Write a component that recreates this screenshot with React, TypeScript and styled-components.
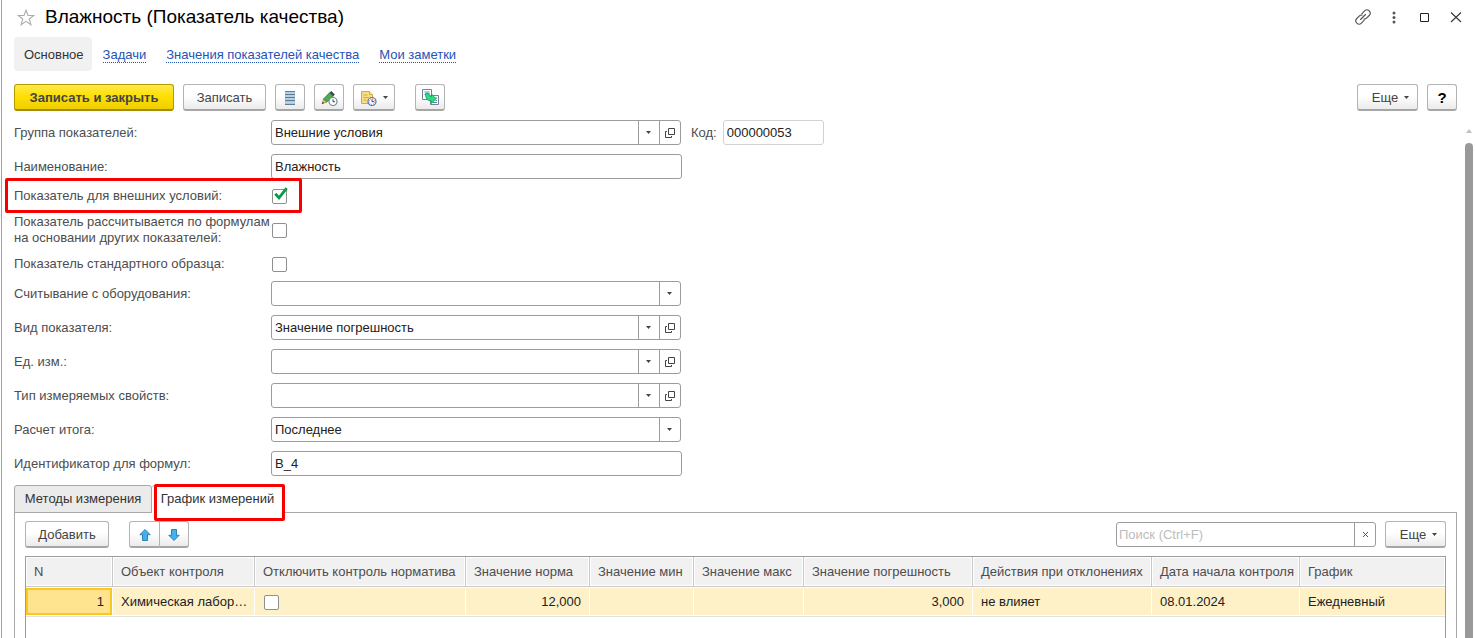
import React from "react";
import styled, { createGlobalStyle } from "styled-components";

const GlobalStyle = createGlobalStyle`
  *, *::before, *::after { box-sizing: border-box; }
  body {
    margin: 0;
    background: #fff;
    color: #4d4d4d;
    font-family: "Liberation Sans", Arial, sans-serif;
    font-size: 13px;
    line-height: 16px;
  }
  button, input, select { font: inherit; color: inherit; }
`;

const Window = styled.main`
  display: flex;
  flex-direction: column;
  height: 100vh;
  overflow: hidden;
  margin-left: 1px;
  padding-left: 1px;
  border-left: 1px solid #a0a0a0;
`;

const TitleBar = styled.header`
  display: flex;
  align-items: center;
  gap: 10px;
  height: 34px;
  padding: 0 11px 0 14px;
`;

const Title = styled.h1`
  flex: 1;
  margin: 0;
  font-size: 19px;
  line-height: 24px;
  font-weight: 400;
  color: #000;
`;

const PlainButton = styled.button`
  display: flex;
  padding: 0;
  border: 0;
  background: none;
  cursor: pointer;
`;

const WindowControls = styled.div`
  display: flex;
  align-items: center;
  gap: 15px;
`;

const Nav = styled.nav`
  display: flex;
  align-items: center;
  gap: 20px;
  margin: 3px 0 13px 11px;
`;

const CurrentPage = styled.span`
  margin-right: -9px;
  padding: 10px 8px 8px 10px;
  border-radius: 4px;
  background: #f1f1f1;
  color: #333;
`;

const NavLink = styled.a`
  padding-top: 2px;
  line-height: 14px;
  color: #2454b8;
  text-decoration: none;
  border-bottom: 1px dotted #2454b8;
`;

const Toolbar = styled.div<{ $inPanel?: boolean }>`
  display: flex;
  align-items: center;
  gap: 9px;
  padding: ${(p) => (p.$inPanel ? "0 0 8px" : "0 18px 0 11px")};
`;

const Gap = styled.span<{ $fill?: boolean }>`
  flex: ${(p) => (p.$fill ? "1" : "0 0 2px")};
`;

const Button = styled.button<{ $width?: number; $primary?: boolean }>`
  display: flex;
  align-items: center;
  justify-content: center;
  gap: 6px;
  width: ${(p) => p.$width ?? 30}px;
  height: 27px;
  padding: 1px 0 0;
  border: 1px solid ${(p) => (p.$primary ? "#b59a00" : "#b4b4b4")};
  border-bottom: ${(p) => (p.$primary ? "2px solid #a48c00" : "2px solid #a6a6a6")};
  border-radius: 3px;
  background: ${(p) =>
    p.$primary
      ? "linear-gradient(#ffe94a, #fddf00 50%, #efcf00)"
      : "linear-gradient(#fff 45%, #ebebeb)"};
  color: #444;
  font-weight: ${(p) => (p.$primary ? 700 : 400)};
  white-space: nowrap;
  cursor: pointer;
`;

const MoreButton = styled(Button)`
  padding-left: 6px;
`;

const HelpButton = styled(Button)`
  color: #000;
  font-size: 15px;
  font-weight: 700;
`;

const ButtonPair = styled.div`
  display: flex;
  margin-left: 11px;

  button:first-child { border-radius: 3px 0 0 3px; width: 31px; }
  button:last-child { border-radius: 0 3px 3px 0; margin-left: -1px; }
`;

const Body = styled.div`
  display: flex;
  flex: 1;
  min-height: 0;
  margin-top: 9px;
`;

const Content = styled.div`
  display: flex;
  flex-direction: column;
  flex: 1;
  min-width: 0;
  padding: 0 8px 0 11px;
`;

const ScrollTrack = styled.div`
  display: flex;
  flex-direction: column;
  align-items: center;
  gap: 9px;
  width: 8px;
  margin: 9px 2px 0 0;
`;

const ScrollThumb = styled.div`
  flex: 1;
  width: 8px;
  border-radius: 4px 4px 0 0;
  background: #999;
`;

const Form = styled.form`
  display: flex;
  flex-direction: column;
  gap: 9px;
  padding-bottom: 9px;
`;

const Row = styled.div<{ $height?: number }>`
  position: relative;
  display: flex;
  align-items: center;
  height: ${(p) => p.$height ?? 25}px;
`;

const Label = styled.label`
  flex: 0 0 257px;
  white-space: nowrap;
`;

const CodeLabel = styled.label`
  margin: 0 6px 0 10px;
`;

const Control = styled.div`
  display: flex;
  width: 410px;
  height: 25px;
  border: 1px solid #9c9c9c;
  border-radius: 3px;
  background: #fff;
  color: #222;
`;

const SelectBox = styled.div`
  position: relative;
  display: flex;
  flex: 1;
`;

const Select = styled.select`
  flex: 1;
  min-width: 0;
  padding: 0 24px 0 3px;
  border: 0;
  background: none;
  appearance: none;
`;

const SelectArrow = styled.span`
  position: absolute;
  inset: 0 0 0 auto;
  display: flex;
  align-items: center;
  justify-content: center;
  width: 21px;
  padding-right: 2px;
  border-left: 1px solid #9c9c9c;
  pointer-events: none;
`;

const CellButton = styled.button`
  display: flex;
  align-items: center;
  justify-content: center;
  width: 21px;
  padding: 0;
  border: 0;
  border-left: 1px solid #9c9c9c;
  background: none;
`;

const TextInput = styled.input<{ $code?: boolean }>`
  width: ${(p) => (p.$code ? 101 : 411)}px;
  height: 25px;
  padding: 0 3px;
  border: 1px solid ${(p) => (p.$code ? "#d2d2d2" : "#9c9c9c")};
  border-radius: 3px;
  background: #fff;
  color: #222;
`;

const CheckBox = styled.span`
  position: relative;
  display: inline-flex;
  margin-left: 1px;

  input {
    width: 15px;
    height: 15px;
    margin: 0;
    border: 1px solid #8f8f8f;
    border-radius: 2px;
    background: #fff;
    appearance: none;
  }

  svg {
    position: absolute;
    left: 2px;
    top: -2px;
    pointer-events: none;
  }
`;

const RedFrame = styled.span`
  position: absolute;
  border: 3px solid #f80000;
  border-radius: 2px;
  pointer-events: none;
`;

const RowFrame = styled(RedFrame)`
  inset: -10px auto -9px -9px;
  width: 297px;
`;

const TabFrame = styled(RedFrame)`
  inset: -2px -2px -9px 2px;
`;

const Tabs = styled.div`
  display: flex;
  height: 28px;
`;

const Tab = styled.button<{ $active?: boolean }>`
  position: relative;
  height: 28px;
  width: ${(p) => (p.$active ? 132 : 138)}px;
  padding: 0 0 1px;
  border: 1px solid #a8a8a8;
  border-bottom-color: ${(p) => (p.$active ? "#fff" : "#a8a8a8")};
  border-left-width: ${(p) => (p.$active ? 0 : 1)}px;
  border-radius: 3px 3px 0 0;
  background: ${(p) => (p.$active ? "#fff" : "#ebebeb")};
  color: #333;
  white-space: nowrap;
  z-index: 1;
`;

const Panel = styled.section`
  display: flex;
  flex-direction: column;
  flex: 1;
  min-height: 0;
  margin-top: -1px;
  padding: 8px 10px 0;
  border: 1px solid #a8a8a8;
  border-bottom: 0;
`;

const Search = styled(Control)`
  width: 260px;

  input {
    flex: 1;
    min-width: 0;
    padding: 0 2px;
    border: 0;
    background: none;
  }
  input::placeholder { color: #bdbdbd; opacity: 1; }
`;

const TableFrame = styled.div`
  flex: 1;
  border: 1px solid #9c9c9c;
  border-bottom: 0;
`;

const Table = styled.table`
  width: 100%;
  table-layout: fixed;
  border-collapse: separate;
  border-spacing: 0;
  border-bottom: 1px solid #e2e2e2;
`;

const Th = styled.th<{ $width?: number }>`
  width: ${(p) => (p.$width ? `${p.$width}px` : "auto")};
  height: 30px;
  padding: 1px 0 0 8px;
  border-right: 1px solid #c8c8c8;
  border-bottom: 1px solid #c8c8c8;
  box-shadow: inset 0 0 0 1px #fff;
  background: #f1f1f1;
  font-weight: 400;
  text-align: left;
  white-space: nowrap;

  &:last-child { border-right: 0; }
`;

const Td = styled.td<{ $right?: boolean; $selected?: boolean }>`
  height: 29px;
  padding: ${(p) => (p.$right ? "0 8px" : "0 0 0 8px")};
  border-right: 1px solid #fff;
  border-top: 1px solid #fff;
  border-bottom: 1px solid #fff;
  box-shadow: ${(p) => (p.$selected ? "inset 0 0 0 2px #fbc71d" : "none")};
  background: ${(p) => (p.$selected ? "#ffe48f" : "#fef1c7")};
  background-clip: padding-box;
  color: #222;
  text-align: ${(p) => (p.$right ? "right" : "left")};
  white-space: nowrap;

  &:last-child { border-right: 0; }
  ${CheckBox} { vertical-align: middle; }
`;

const Caret = () => (
  <svg width="5" height="3" viewBox="0 0 5 3" aria-hidden="true">
    <path d="M0 0h5L2.5 3z" fill="#444" />
  </svg>
);

const OpenIcon = () => (
  <svg width="10" height="10" viewBox="0 0 10 10" fill="none" stroke="#444" aria-hidden="true">
    <path d="M3.500 .5h6v6h-6zM2 3.500H.5v6h6V8" />
  </svg>
);

const StarIcon = () => (
  <svg width="18" height="17" viewBox="0 0 18 17" fill="none" stroke="#a8acb0" strokeWidth="1.100" aria-hidden="true">
    <path d="M9 1.200l2 5.300h5.800l-4.600 3.500 1.700 5.700L9 12.300l-4.900 3.400 1.700-5.700L1.200 6.500H7z" />
  </svg>
);

const LinkIcon = () => (
  <svg width="16" height="16" viewBox="0 0 16 16" fill="none" stroke="#555" strokeWidth="1.150" strokeLinecap="round" aria-hidden="true">
    <path d="M5.500 10.500l5-5" />
    <path d="M6.800 4.800l2.800-2.900a3.250 3.250 0 0 1 4.600 4.600l-2.900 2.800q-1 .9-2.300.6" />
    <path d="M9.200 11.200l-2.800 2.900a3.250 3.250 0 0 1-4.600-4.600l2.900-2.800q1-.9 2.300-.6" />
  </svg>
);

const DotsIcon = () => (
  <svg width="16" height="16" viewBox="0 0 16 16" fill="#555" aria-hidden="true">
    <circle cx="8" cy="4" r="1.500" /><circle cx="8" cy="8.500" r="1.500" /><circle cx="8" cy="13" r="1.500" />
  </svg>
);

const MaximizeIcon = () => (
  <svg width="16" height="16" viewBox="0 0 16 16" fill="none" stroke="#222" aria-hidden="true">
    <path d="M3.500 4.500h8v8h-8z" />
  </svg>
);

const CloseIcon = () => (
  <svg width="16" height="16" viewBox="0 0 16 16" fill="none" stroke="#333" strokeWidth="1.100" aria-hidden="true">
    <path d="M3 3.500l10 9.500M13 3.500L3 13" />
  </svg>
);

const ListIcon = () => (
  <svg width="10" height="14" viewBox="0 0 10 14" aria-hidden="true">
    <path d="M0 0h10v14H0z" fill="#a9c6da" />
    <path d="M0 .5h10M0 3.500h10M0 6.500h10M0 9.500h10M0 13.500h10" stroke="#5d7f98" />
    <path d="M1 2h8M1 5h8M1 8h8M1 11.500h8" stroke="#c3d8e6" />
  </svg>
);

const Clock = ({ red }: { red?: boolean }) => (
  <>
    <circle cx="12" cy="11.500" r="4" fill="#fff" stroke={red ? "#3f7fbf" : "#6e8a9c"} strokeWidth="1.200" />
    {red && <circle cx="12" cy="11.500" r="2.900" fill="none" stroke="#e0442f" strokeWidth=".9" strokeDasharray="1 1.280" />}
    <path d="M12 9.300v2.400h2" fill="none" stroke="#26486a" />
  </>
);

const PencilIcon = () => (
  <svg width="17" height="16" viewBox="0 0 17 16" aria-hidden="true">
    <path d="M1 14l1.500-5 3.200 3z" fill="#f0c96a" stroke="#a37b2b" strokeWidth=".6" />
    <path d="M1 14l.7-2.200 1.400 1.300z" fill="#333" />
    <path d="M2.500 9l6-6.200 3.700 3.500L5.700 12z" fill="#4dad52" stroke="#2b7439" strokeWidth=".8" />
    <path d="M8.500 2.800L10.300 1l3.600 3.500-1.700 1.800z" fill="#3c4a50" />
    <Clock />
  </svg>
);

const NoteIcon = () => (
  <svg width="17" height="16" viewBox="0 0 17 16" aria-hidden="true">
    <path d="M1.500 1.500h8l3 3v9h-11z" fill="#f7dc84" stroke="#d3ab45" />
    <path d="M9.500 1.500v3h3" fill="#fff2be" stroke="#d3ab45" />
    <path d="M3.500 5h4M3.500 7.500h5M3.500 10h3" stroke="#d3ab45" />
    <Clock red />
  </svg>
);

const CopyIcon = () => (
  <svg width="17" height="17" viewBox="0 0 17 17" aria-hidden="true">
    <path d="M.5 .5h9v10h-9z" fill="#fff" stroke="#71839a" />
    <path d="M8.500 6.500h8v9h-8z" fill="#fff" stroke="#71839a" />
    <path d="M2.500 3h5M2.500 5.500h2M13 9h2M13.500 11.500H15M11 13.500h4" stroke="#71839a" />
    <path d="M3.500 4.500h3.700c0 2.300.6 3.200 2.300 3.200V5l4.500 4.800-4.500 4.700v-2.600c-4 0-6-2.400-6-7.400z" fill="#25e083" stroke="#0f9a50" strokeWidth=".8" />
  </svg>
);

const ArrowIcon = ({ down }: { down?: boolean }) => (
  <svg width="12" height="12" viewBox="0 0 12 12" aria-hidden="true">
    <path
      d={down ? "M6 11.500L.8 6.300h2.700V.5h5v5.800h2.700z" : "M6 .5L.8 5.700h2.700v5.800h5V5.700h2.700z"}
      fill="#41b1f0"
      stroke="#2378ad"
      strokeWidth=".9"
    />
  </svg>
);

const SmallCross = () => (
  <svg width="7" height="7" viewBox="0 0 7 7" stroke="#555" aria-hidden="true">
    <path d="M1 1l5 5M6 1L1 6" />
  </svg>
);

const Tick = () => (
  <svg width="14" height="14" viewBox="0 0 14 14" fill="none" stroke="#0a9a48" strokeWidth="2.800" aria-hidden="true">
    <path d="M1.300 6.800l3.700 4L12.700 1.200" />
  </svg>
);

type ChoiceProps = { id: string; label: string; value?: string; open?: boolean; children?: React.ReactNode };

const ChoiceRow = ({ id, label, value = "", open, children }: ChoiceProps) => (
  <Row>
    <Label htmlFor={id}>{label}</Label>
    <Control>
      <SelectBox>
        <Select id={id} defaultValue={value}>
          <option value={value}>{value}</option>
        </Select>
        <SelectArrow><Caret /></SelectArrow>
      </SelectBox>
      {open && <CellButton type="button" aria-label="Открыть"><OpenIcon /></CellButton>}
    </Control>
    {children}
  </Row>
);

const columns: { title: string; width?: number }[] = [
  { title: "N", width: 87 },
  { title: "Объект контроля", width: 142 },
  { title: "Отключить контроль норматива", width: 211 },
  { title: "Значение норма", width: 124 },
  { title: "Значение мин", width: 104 },
  { title: "Значение макс", width: 110 },
  { title: "Значение погрешность", width: 169 },
  { title: "Действия при отклонениях", width: 179 },
  { title: "Дата начала контроля", width: 148 },
  { title: "График" },
];

export default function App() {
  return (
    <>
      <GlobalStyle />
      <Window>
        <TitleBar>
          <PlainButton aria-label="Избранное"><StarIcon /></PlainButton>
          <Title>Влажность (Показатель качества)</Title>
          <WindowControls>
            <PlainButton aria-label="Ссылка"><LinkIcon /></PlainButton>
            <PlainButton aria-label="Меню"><DotsIcon /></PlainButton>
            <PlainButton aria-label="Развернуть"><MaximizeIcon /></PlainButton>
            <PlainButton aria-label="Закрыть"><CloseIcon /></PlainButton>
          </WindowControls>
        </TitleBar>

        <Nav>
          <CurrentPage>Основное</CurrentPage>
          <NavLink href="#tasks">Задачи</NavLink>
          <NavLink href="#values">Значения показателей качества</NavLink>
          <NavLink href="#notes">Мои заметки</NavLink>
        </Nav>

        <Toolbar>
          <Button $primary $width={160}>Записать и закрыть</Button>
          <Button $width={83}>Записать</Button>
          <Button aria-label="Список"><ListIcon /></Button>
          <Button aria-label="Изменить"><PencilIcon /></Button>
          <Button $width={42} aria-label="Напоминание"><NoteIcon /><Caret /></Button>
          <Gap />
          <Button aria-label="Скопировать"><CopyIcon /></Button>
          <Gap $fill />
          <MoreButton $width={61}>Еще <Caret /></MoreButton>
          <HelpButton>?</HelpButton>
        </Toolbar>

        <Body>
          <Content>
            <Form>
              <ChoiceRow id="group" label="Группа показателей:" value="Внешние условия" open>
                <CodeLabel htmlFor="code">Код:</CodeLabel>
                <TextInput id="code" $code defaultValue="000000053" />
              </ChoiceRow>
              <Row>
                <Label htmlFor="name">Наименование:</Label>
                <TextInput id="name" defaultValue="Влажность" />
              </Row>
              <Row $height={16}>
                <Label htmlFor="external">Показатель для внешних условий:</Label>
                <CheckBox>
                  <input id="external" type="checkbox" defaultChecked />
                  <Tick />
                </CheckBox>
                <RowFrame />
              </Row>
              <Row $height={34}>
                <Label htmlFor="formula">
                  Показатель рассчитывается по формулам<br />на основании других показателей:
                </Label>
                <CheckBox><input id="formula" type="checkbox" /></CheckBox>
              </Row>
              <Row $height={16}>
                <Label htmlFor="standard">Показатель стандартного образца:</Label>
                <CheckBox><input id="standard" type="checkbox" /></CheckBox>
              </Row>
              <ChoiceRow id="device" label="Считывание с оборудования:" />
              <ChoiceRow id="kind" label="Вид показателя:" value="Значение погрешность" open />
              <ChoiceRow id="unit" label="Ед. изм.:" open />
              <ChoiceRow id="type" label="Тип измеряемых свойств:" open />
              <ChoiceRow id="total" label="Расчет итога:" value="Последнее" />
              <Row>
                <Label htmlFor="ident">Идентификатор для формул:</Label>
                <TextInput id="ident" defaultValue="В_4" />
              </Row>
            </Form>

            <Tabs role="tablist">
              <Tab role="tab" aria-selected="false">Методы измерения</Tab>
              <Tab role="tab" aria-selected="true" $active>
                График измерений
                <TabFrame />
              </Tab>
            </Tabs>

            <Panel>
              <Toolbar $inPanel>
                <Button $width={84}>Добавить</Button>
                <ButtonPair>
                  <Button aria-label="Вверх"><ArrowIcon /></Button>
                  <Button aria-label="Вниз"><ArrowIcon down /></Button>
                </ButtonPair>
                <Gap $fill />
                <Search>
                  <input type="text" placeholder="Поиск (Ctrl+F)" aria-label="Поиск" />
                  <CellButton aria-label="Очистить"><SmallCross /></CellButton>
                </Search>
                <MoreButton $width={61}>Еще <Caret /></MoreButton>
              </Toolbar>
              <TableFrame>
                <Table>
                  <thead>
                    <tr>
                      {columns.map((c) => <Th key={c.title} $width={c.width}>{c.title}</Th>)}
                    </tr>
                  </thead>
                  <tbody>
                    <tr>
                      <Td $right $selected>1</Td>
                      <Td>Химическая лабор…</Td>
                      <Td><CheckBox><input type="checkbox" aria-label="Отключить контроль норматива" /></CheckBox></Td>
                      <Td $right>12,000</Td>
                      <Td />
                      <Td />
                      <Td $right>3,000</Td>
                      <Td>не влияет</Td>
                      <Td>08.01.2024</Td>
                      <Td>Ежедневный</Td>
                    </tr>
                  </tbody>
                </Table>
              </TableFrame>
            </Panel>
          </Content>
          <ScrollTrack>
            <svg width="6" height="5" viewBox="0 0 6 5" aria-hidden="true">
              <path d="M3 0l3 4H0z" fill="#c0c0c0" />
            </svg>
            <ScrollThumb />
          </ScrollTrack>
        </Body>
      </Window>
    </>
  );
}
